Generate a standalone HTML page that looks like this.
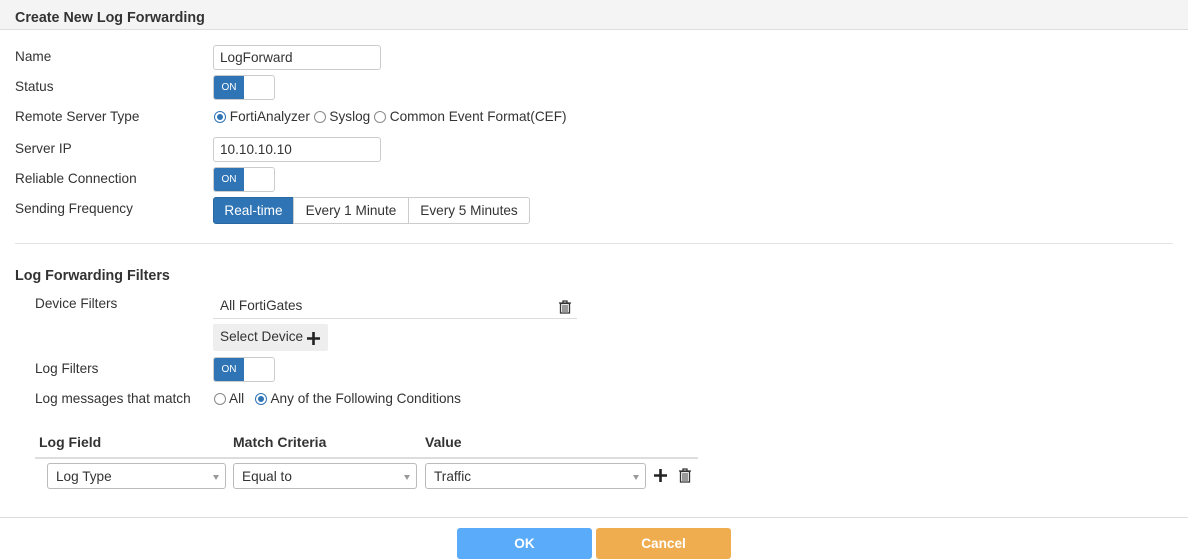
<!DOCTYPE html>
<html><head><style>
*{box-sizing:border-box;margin:0;padding:0}
body{width:1188px;height:559px;background:#fff;font-family:"Liberation Sans",sans-serif;font-size:13.6px;color:#333;position:relative;overflow:hidden}
.a{position:absolute;white-space:nowrap}
.hdr{position:absolute;left:0;top:0;width:1188px;height:30px;background:#f4f4f4;border-bottom:1px solid #ddd}
.inp{position:absolute;border:1px solid #ccc;border-radius:3px;height:25px;padding:4px 6px;background:#fff}
.tg{position:absolute;width:62px;height:25px;border:1px solid #ccc;border-radius:3px;overflow:hidden;background:#fff}
.tg span{position:absolute;left:0;top:0;width:30px;height:100%;background:#2f74b5;color:#fff;font-size:10px;line-height:23px;text-align:center}
.rd{display:inline-block;width:12px;height:12px;border:1px solid #888;border-radius:50%;vertical-align:-2px;position:relative;background:#fff}
.rd.on{border-color:#2f74b5}
.rd.on:after{content:"";position:absolute;left:2px;top:2px;width:6px;height:6px;border-radius:50%;background:#2f74b5}
.sel{position:absolute;height:26px;border:1px solid #bbb;border-radius:3px;padding:5px 8px}
.sel:after{content:"";position:absolute;right:6px;top:11px;border-left:3px solid transparent;border-right:3px solid transparent;border-top:5px solid #999}
.b{font-weight:bold}
</style></head><body>
<div class="hdr"></div>
<div class="a b" style="left:15px;top:10px;font-size:14.3px">Create New Log Forwarding</div>

<div class="a" style="left:15px;top:49px">Name</div>
<div class="inp" style="left:213px;top:45px;width:168px">LogForward</div>
<div class="a" style="left:15px;top:79px">Status</div>
<div class="tg" style="left:213px;top:75px"><span>ON</span></div>
<div class="a" style="left:15px;top:109px">Remote Server Type</div>
<div class="a" style="left:214px;top:109px"><i class="rd on"></i> FortiAnalyzer <i class="rd"></i> Syslog <i class="rd"></i> Common Event Format(CEF)</div>
<div class="a" style="left:15px;top:141px">Server IP</div>
<div class="inp" style="left:213px;top:137px;width:168px">10.10.10.10</div>
<div class="a" style="left:15px;top:171px">Reliable Connection</div>
<div class="tg" style="left:213px;top:167px"><span>ON</span></div>
<div class="a" style="left:15px;top:201px">Sending Frequency</div>
<div class="a" style="left:213px;top:197px;height:27px;width:81px;background:#2f74b5;color:#fff;border:1px solid #2a68a3;border-radius:3px 0 0 3px;text-align:center;line-height:25px">Real-time</div>
<div class="a" style="left:293px;top:197px;height:27px;width:116px;border:1px solid #ccc;text-align:center;line-height:25px">Every 1 Minute</div>
<div class="a" style="left:408px;top:197px;height:27px;width:122px;border:1px solid #ccc;border-radius:0 3px 3px 0;text-align:center;line-height:25px">Every 5 Minutes</div>

<div class="a" style="left:15px;top:243px;width:1158px;height:1px;background:#e4e4e4"></div>

<div class="a b" style="left:15px;top:268px;font-size:14.3px">Log Forwarding Filters</div>
<div class="a" style="left:35px;top:296px">Device Filters</div>
<div class="a" style="left:220px;top:298px">All FortiGates</div>
<div class="a" style="left:213px;top:318px;width:364px;height:1px;background:#ddd"></div>
<svg class="a" style="left:558px;top:300px" width="14" height="14" viewBox="0 0 14 14"><path d="M1 3h12M5 3V1h4v2M2.5 3.5h9V13h-9z" fill="none" stroke="#333" stroke-width="1.3"/><path d="M5 5v7M7 5v7M9 5v7" stroke="#333" stroke-width="1"/></svg>
<div class="a" style="left:213px;top:324px;width:115px;height:27px;background:#eee;border-radius:2px;padding:5px 7px">Select Device</div>
<svg class="a" style="left:306px;top:331px" width="15" height="15"><path d="M7.5 1v13M1 7.5h13" stroke="#222" stroke-width="2.6"/></svg>
<div class="a" style="left:35px;top:361px">Log Filters</div>
<div class="tg" style="left:213px;top:357px"><span>ON</span></div>
<div class="a" style="left:35px;top:391px">Log messages that match</div>
<div class="a" style="left:214px;top:391px"><i class="rd"></i> All &nbsp;&nbsp;<i class="rd on"></i> Any of the Following Conditions</div>

<div class="a b" style="left:39px;top:434px;font-size:14px">Log Field</div>
<div class="a b" style="left:233px;top:434px;font-size:14px">Match Criteria</div>
<div class="a b" style="left:425px;top:434px;font-size:14px">Value</div>
<div class="a" style="left:35px;top:457px;width:663px;height:2px;background:#ddd"></div>
<div class="sel" style="left:47px;top:463px;width:179px">Log Type</div>
<div class="sel" style="left:233px;top:463px;width:184px">Equal to</div>
<div class="sel" style="left:425px;top:463px;width:221px">Traffic</div>
<svg class="a" style="left:653px;top:468px" width="15" height="15"><path d="M7.5 1v13M1 7.5h13" stroke="#222" stroke-width="2.6"/></svg>
<svg class="a" style="left:678px;top:468px" width="14" height="15" viewBox="0 0 14 15"><path d="M1 3h12M5 3V1h4v2M2.5 3.5h9V14h-9z" fill="none" stroke="#333" stroke-width="1.3"/><path d="M5 5v8M7 5v8M9 5v8" stroke="#333" stroke-width="1"/></svg>

<div class="a" style="left:0;top:517px;width:1188px;height:1px;background:#ddd"></div>
<div class="a b" style="left:457px;top:528px;width:135px;height:31px;background:#5aabfa;border-radius:3px;color:#fff;text-align:center;line-height:31px">OK</div>
<div class="a b" style="left:596px;top:528px;width:135px;height:31px;background:#efad4f;border-radius:3px;color:#fff;text-align:center;line-height:31px">Cancel</div>
</body></html>
